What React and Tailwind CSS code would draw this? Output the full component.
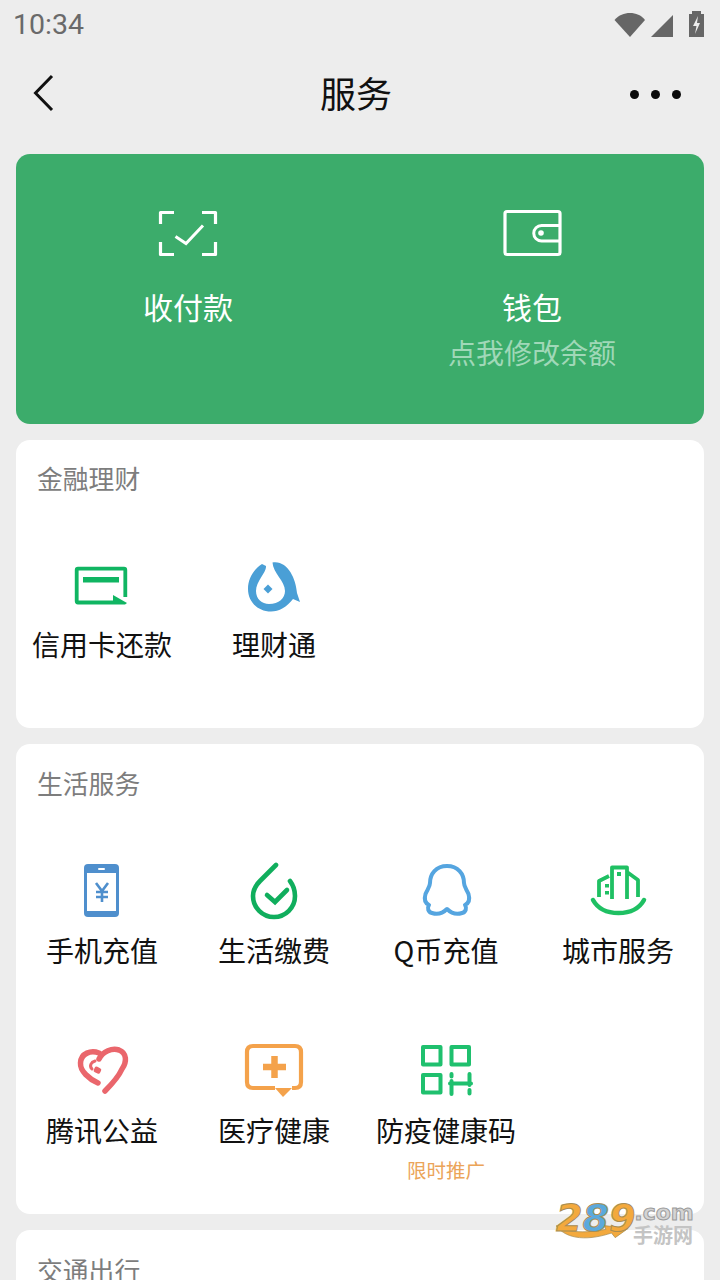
const cjk = { fontFamily: '"Noto Sans CJK SC", "Noto Sans", sans-serif' };

function Ic({ vb, children }) {
  return (
    <svg viewBox={vb} className="w-16 h-16 shrink-0" fill="none">
      {children}
    </svg>
  );
}

const Scan = () => (
  <Ic vb="156 200 64 64">
    <path d="M174 212.500H160.500V224M202 212.500H215.500V224M160.500 242V254.500H174M215.500 242V254.500H202" stroke="#fff" strokeWidth="3.200" strokeLinejoin="round" />
    <path d="M175.500 236.500L186 243.500L203 225.500" stroke="#fff" strokeWidth="3" />
  </Ic>
);
const Wallet = () => (
  <Ic vb="500 200 64 64">
    <rect x="505" y="211.500" width="55" height="43" rx="2" stroke="#fff" strokeWidth="3.200" />
    <path d="M560 225.500H541.500A7.500 7.500 0 0 0 541.500 241H560" stroke="#fff" strokeWidth="3" />
    <circle cx="541" cy="233" r="2.800" fill="#fff" />
  </Ic>
);
const Card = () => (
  <Ic vb="70 553 64 64">
    <path d="M113 601.500H78Q76.700 601.500 76.700 600V569Q76.700 567.700 78 567.700H124Q125.300 567.700 125.300 569V596" stroke="#10b562" strokeWidth="3.800" />
    <rect x="83" y="576" width="36" height="5.500" fill="#10b562" />
    <path d="M113 594L127 602L125 603.500H113Z" fill="#10b562" />
  </Ic>
);
const Fish = () => (
  <Ic vb="243 553 64 64">
    <path d="M273.500 561.500C288 559 297 577 298 592L301 601L294 598C288 606 280 610.500 272 610.500C258 610.500 249 600 249 588C249 577 255 568 263 563L267 565C268 571 257 580 257 590C257 598 263 603 270 603C280 603 286 597 286 590C286 580 274 572 273.500 561.500Z" fill="#4a9fd6" />
    <path d="M269 583.500L273.500 588L269 592.500L264.500 588Z" fill="#4a9fd6" />
  </Ic>
);
const Phone = () => (
  <Ic vb="70 858 64 64">
    <rect x="84" y="864" width="35" height="53" rx="4" fill="#4f8fcd" />
    <rect x="87" y="873" width="29" height="38" fill="#fff" />
    <rect x="98" y="868" width="7" height="2" rx="1" fill="#fff" />
    <path d="M96 883L102 891L108 883M102 891V902M96 892H108M96 897H108" stroke="#4f8fcd" strokeWidth="2.600" />
  </Ic>
);
const Pay = () => (
  <Ic vb="242 858 64 64">
    <path d="M276 865L260 881C255 886 253 891 253 896A21 21 0 0 0 295 896C295 890 293 885 290 881" stroke="#10ae5d" strokeWidth="4.600" strokeLinecap="round" />
    <path d="M267 895L275 902L287 890" stroke="#10ae5d" strokeWidth="4.600" strokeLinecap="round" />
  </Ic>
);
const QQ = () => (
  <Ic vb="414 858 64 64">
    <path d="M447 866C436 866 430 874 430 883C430 887 427 890 425.500 894C424 899 425 903 429 905C427 908 428 912 432 913C438 915 443 913 447 909C451 913 456 915 462 913C466 912 467 908 465 905C469 903 470 899 468.500 894C467 890 464 887 464 883C464 874 458 866 447 866Z" stroke="#55a5e0" strokeWidth="4" strokeLinejoin="round" />
  </Ic>
);
const City = () => (
  <Ic vb="586 858 64 64">
    <path d="M593 900C598 909 608 913 618.500 913C629 913 639 909 644 900" stroke="#1fc063" strokeWidth="4.500" strokeLinecap="round" />
    <path d="M599 897V881L609 876M612 899V867.500H627V899M627 872L638 880V897" stroke="#1fc063" strokeWidth="3.800" strokeLinejoin="round" />
    <rect x="605" y="884" width="4" height="3.500" fill="#1fc063" />
    <rect x="605" y="891" width="4" height="3.500" fill="#1fc063" />
    <rect x="617" y="872" width="4" height="4" fill="#1fc063" />
  </Ic>
);
const Heart = () => (
  <Ic vb="70 1038 64 64">
    <path d="M99 1053C91 1050 81 1053 80.500 1063C80 1071 89 1079 98 1083" stroke="#ea666c" strokeWidth="5.500" strokeLinecap="round" />
    <path d="M99 1059C103 1051 112 1048 119 1050C127 1053 127 1062 122 1069C118 1078 111 1085 105 1091" stroke="#ea666c" strokeWidth="5.500" strokeLinecap="round" />
    <path d="M95 1061C91 1062 89 1066 92 1069" stroke="#ea666c" strokeWidth="3" strokeLinecap="round" />
    <rect x="94" y="1067" width="7" height="6" rx="2" transform="rotate(25 97 1070)" fill="#ea666c" />
  </Ic>
);
const Med = () => (
  <Ic vb="242 1038 64 64">
    <path d="M275 1088H253C249 1088 247 1086 247 1082V1052C247 1048 249 1046 253 1046H295C299 1046 301 1048 301 1052V1082C301 1086 299 1088 295 1088H292" stroke="#f4a24b" strokeWidth="4.200" />
    <path d="M275 1088H292L283 1097Z" fill="#f4a24b" />
    <path d="M263 1067H286M274.500 1056V1078" stroke="#f4a24b" strokeWidth="6.500" />
  </Ic>
);
const QR = () => (
  <Ic vb="415 1038 64 64">
    <g stroke="#1fc06e" strokeWidth="4" strokeLinejoin="round">
      <rect x="424" y="1047" width="17.500" height="17.500" />
      <rect x="452.500" y="1047" width="17.500" height="17.500" />
      <rect x="424" y="1075" width="17.500" height="17.500" />
      <path d="M452.500 1074V1076.500M452.500 1081V1094M451 1083.500H472M470.500 1074V1085M470.500 1090V1093.500" strokeLinecap="round" />
    </g>
  </Ic>
);

function Item({ icon, label, sub, labelClass = 'mt-2' }) {
  return (
    <div className="h-[180px] flex flex-col items-center pt-[34px]">
      {icon}
      <div className={`${labelClass} text-[28px] leading-10 text-[#111] whitespace-nowrap`}>{label}</div>
      {sub && <div className="mt-[6px] text-[19.500px] leading-7 text-[#eba459] whitespace-nowrap">{sub}</div>}
    </div>
  );
}

function Section({ title, className, titleClass, children }) {
  return (
    <section className={`bg-white rounded-[14px] ${className}`}>
      <div className={`h-20 pl-[21px] flex items-center text-[25.800px] text-[#7d7d7d] ${titleClass}`}>{title}</div>
      <div className="grid grid-cols-4">{children}</div>
    </section>
  );
}

export default function App() {
  return (
    <div style={cjk} className="relative w-[720px] h-[1280px] overflow-hidden bg-[#ededed]">
      <div className="h-12 px-[13px] flex items-center justify-between">
        <span className="mt-[3px] text-[28.500px] text-[#6a6a6a]" style={{ fontFamily: 'Roboto, sans-serif' }}>10:34</span>
        <svg viewBox="610 7 100 32" className="w-[100px] h-8" fill="#666">
          <path d="M617.500 19C622 14 627 12 633 12C639 12 644 14 648 19L633 36Z" />
          <path d="M676 14V36H654Z" />
          <path d="M695 13V10H704V13H707V36H692V13Z" />
          <path d="M701 15L696 25H699.500L698 33L703 22H700Z" fill="#ededed" />
        </svg>
      </div>

      <div className="h-[92px] flex items-center">
        <div className="w-24 pl-[30px] flex">
          <svg viewBox="0 0 28 40" className="w-7 h-10" fill="none">
            <path d="M22 2L5.500 19L22 36" stroke="#111" strokeWidth="3" />
          </svg>
        </div>
        <div className="flex-1 mb-1 text-center text-4xl leading-none text-[#111]">服务</div>
        <div className="w-[104px] flex items-center gap-3 pl-[14px]">
          <span className="w-[9px] h-[9px] rounded-full bg-[#0a0a0a]" />
          <span className="w-[9px] h-[9px] rounded-full bg-[#0a0a0a]" />
          <span className="w-[9px] h-[9px] rounded-full bg-[#0a0a0a]" />
        </div>
      </div>

      <div className="mx-4 mt-[14px] flex flex-col gap-4">
        <section className="h-[270px] rounded-[14px] bg-[#3cac6b] grid grid-cols-2 text-white">
          <div className="flex flex-col items-center pt-[46px]">
            <Scan />
            <div className="mt-5 text-[30px] leading-[44px]">收付款</div>
          </div>
          <div className="flex flex-col items-center pt-[46px]">
            <Wallet />
            <div className="mt-5 text-[30px] leading-[44px]">钱包</div>
            <div className="mt-[2px] text-[28px] leading-[44px] text-[#a0d8b8]">点我修改余额</div>
          </div>
        </section>

        <Section title="金融理财" className="pb-7" titleClass="pb-1">
          <Item icon={<Card />} label="信用卡还款" labelClass="mt-[6px]" />
          <Item icon={<Fish />} label="理财通" labelClass="mt-[6px]" />
        </Section>

        <Section title="生活服务" className="pb-[30px]" titleClass="pb-[2px]">
          <Item icon={<Phone />} label="手机充值" />
          <Item icon={<Pay />} label="生活缴费" />
          <Item icon={<QQ />} label="Q币充值" />
          <Item icon={<City />} label="城市服务" />
          <Item icon={<Heart />} label="腾讯公益" />
          <Item icon={<Med />} label="医疗健康" />
          <Item icon={<QR />} label="防疫健康码" sub="限时推广" />
        </Section>

        <Section title="交通出行" className="pb-10" titleClass="">
          <div />
        </Section>
      </div>

      <div className="absolute left-[556px] top-[1200px] w-[142px] h-[42px]">
        <svg viewBox="0 0 80 16" className="absolute left-0 top-[25px] w-[74px] h-4">
          <path d="M0 0C10 7 30 9 54 4L52 0L78 3L64 13L60 8C36 16 12 16 0 0Z" fill="#f3a93d" stroke="#a98d52" strokeWidth="0.800" />
        </svg>
        <div className="relative flex items-start whitespace-nowrap" style={{ fontFamily: '"DejaVu Sans", sans-serif' }}>
          <span className="text-[38px] leading-[36px] font-bold italic text-[#f3a93d] [-webkit-text-stroke:1px_#a98d52]">2<span className="text-[#5aa9dc]">8</span>9</span>
          <span className="-ml-[1px] mt-[1px] text-[22px] leading-[24px] font-bold text-[#d4d4d4] [-webkit-text-stroke:1px_#9a9a9a]">.com</span>
        </div>
        <div className="absolute left-[77px] top-[27px] text-[20px] leading-[16px] font-bold text-[#c4c4c4]">手游网</div>
      </div>
    </div>
  );
}
